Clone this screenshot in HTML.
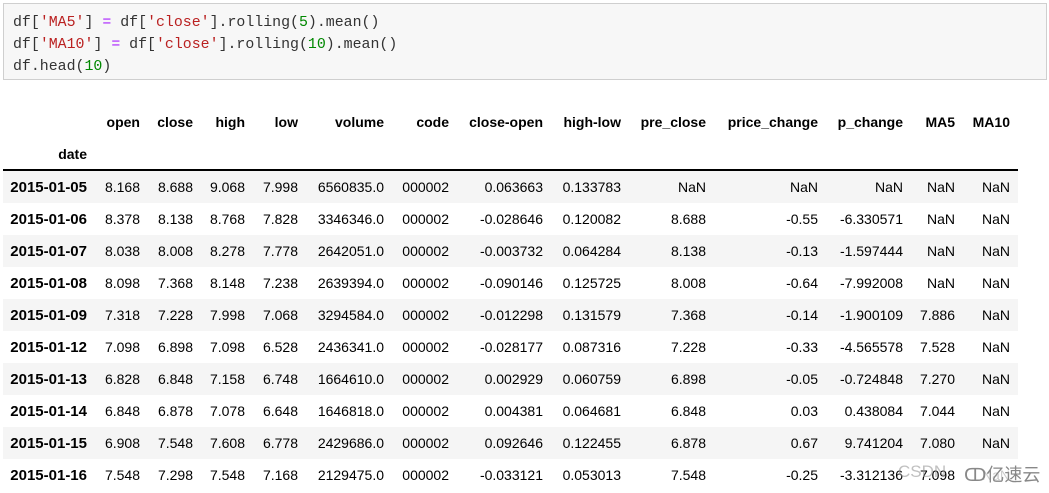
<!DOCTYPE html>
<html><head><meta charset="utf-8"><style>
body{margin:0;width:1049px;height:493px;background:#fff;overflow:hidden;position:relative;font-family:"Liberation Sans",Arial,sans-serif;}
.code{position:absolute;left:3px;top:3px;width:1044px;height:77px;background:#f7f7f7;border:1px solid #cfcfcf;box-sizing:border-box;}
.code pre{margin:0;position:absolute;left:9px;top:8px;font-family:"Liberation Mono","Noto Serif CJK SC",monospace;font-size:14.9px;line-height:22px;color:#333;}
.s{color:#ba2121}.n{color:#080}.o{color:#a2f}
table{position:absolute;left:3px;top:106px;border-collapse:collapse;table-layout:fixed;font-size:14px;color:#000;}
td,th{text-align:right;padding:0 5px 0 0;height:32px;white-space:nowrap;}
th{font-weight:bold;}
tbody th{font-size:15px;}
tr.h2 th{border-bottom:2px solid #000;height:31px;}
tbody tr:nth-child(odd){background:#f5f5f5;}
.wm{position:absolute;left:898px;top:462px;font-size:17px;color:rgba(150,150,150,.6);}
.wm2{position:absolute;left:960px;top:461px;font-size:18px;color:#888;font-family:"Liberation Sans","Noto Sans CJK SC",sans-serif;background:rgba(255,255,255,.8);padding:0 4px;}
</style></head><body>
<div class="code"><pre>df[<span class="s">'MA5'</span>] <span class="o">=</span> df[<span class="s">'close'</span>].rolling(<span class="n">5</span>).mean()
df[<span class="s">'MA10'</span>] <span class="o">=</span> df[<span class="s">'close'</span>].rolling(<span class="n">10</span>).mean()
df.head(<span class="n">10</span>)</pre></div>
<table>
<colgroup><col style="width:89px"><col style="width:53px"><col style="width:53px"><col style="width:52px"><col style="width:53px"><col style="width:86px"><col style="width:65px"><col style="width:94px"><col style="width:78px"><col style="width:85px"><col style="width:112px"><col style="width:85px"><col style="width:52px"><col style="width:58px"></colgroup>
<thead>
<tr><th></th><th>open</th><th>close</th><th>high</th><th>low</th><th>volume</th><th>code</th><th>close-open</th><th>high-low</th><th>pre_close</th><th>price_change</th><th>p_change</th><th>MA5</th><th style="padding-right:8px">MA10</th></tr>
<tr class="h2"><th style="font-size:14px">date</th><th></th><th></th><th></th><th></th><th></th><th></th><th></th><th></th><th></th><th></th><th></th><th></th><th></th></tr>
</thead>
<tbody>
<tr><th>2015-01-05</th><td>8.168</td><td>8.688</td><td>9.068</td><td>7.998</td><td>6560835.0</td><td>000002</td><td>0.063663</td><td>0.133783</td><td>NaN</td><td>NaN</td><td>NaN</td><td>NaN</td><td style="padding-right:8px">NaN</td></tr>
<tr><th>2015-01-06</th><td>8.378</td><td>8.138</td><td>8.768</td><td>7.828</td><td>3346346.0</td><td>000002</td><td>-0.028646</td><td>0.120082</td><td>8.688</td><td>-0.55</td><td>-6.330571</td><td>NaN</td><td style="padding-right:8px">NaN</td></tr>
<tr><th>2015-01-07</th><td>8.038</td><td>8.008</td><td>8.278</td><td>7.778</td><td>2642051.0</td><td>000002</td><td>-0.003732</td><td>0.064284</td><td>8.138</td><td>-0.13</td><td>-1.597444</td><td>NaN</td><td style="padding-right:8px">NaN</td></tr>
<tr><th>2015-01-08</th><td>8.098</td><td>7.368</td><td>8.148</td><td>7.238</td><td>2639394.0</td><td>000002</td><td>-0.090146</td><td>0.125725</td><td>8.008</td><td>-0.64</td><td>-7.992008</td><td>NaN</td><td style="padding-right:8px">NaN</td></tr>
<tr><th>2015-01-09</th><td>7.318</td><td>7.228</td><td>7.998</td><td>7.068</td><td>3294584.0</td><td>000002</td><td>-0.012298</td><td>0.131579</td><td>7.368</td><td>-0.14</td><td>-1.900109</td><td>7.886</td><td style="padding-right:8px">NaN</td></tr>
<tr><th>2015-01-12</th><td>7.098</td><td>6.898</td><td>7.098</td><td>6.528</td><td>2436341.0</td><td>000002</td><td>-0.028177</td><td>0.087316</td><td>7.228</td><td>-0.33</td><td>-4.565578</td><td>7.528</td><td style="padding-right:8px">NaN</td></tr>
<tr><th>2015-01-13</th><td>6.828</td><td>6.848</td><td>7.158</td><td>6.748</td><td>1664610.0</td><td>000002</td><td>0.002929</td><td>0.060759</td><td>6.898</td><td>-0.05</td><td>-0.724848</td><td>7.270</td><td style="padding-right:8px">NaN</td></tr>
<tr><th>2015-01-14</th><td>6.848</td><td>6.878</td><td>7.078</td><td>6.648</td><td>1646818.0</td><td>000002</td><td>0.004381</td><td>0.064681</td><td>6.848</td><td>0.03</td><td>0.438084</td><td>7.044</td><td style="padding-right:8px">NaN</td></tr>
<tr><th>2015-01-15</th><td>6.908</td><td>7.548</td><td>7.608</td><td>6.778</td><td>2429686.0</td><td>000002</td><td>0.092646</td><td>0.122455</td><td>6.878</td><td>0.67</td><td>9.741204</td><td>7.080</td><td style="padding-right:8px">NaN</td></tr>
<tr><th>2015-01-16</th><td>7.548</td><td>7.298</td><td>7.548</td><td>7.168</td><td>2129475.0</td><td>000002</td><td>-0.033121</td><td>0.053013</td><td>7.548</td><td>-0.25</td><td>-3.312136</td><td>7.098</td><td style="padding-right:8px">NaN</td></tr>
</tbody>
</table>
<div class="wm">CSDN</div>
<div class="wm2">ↀ亿速云</div>
</body></html>
